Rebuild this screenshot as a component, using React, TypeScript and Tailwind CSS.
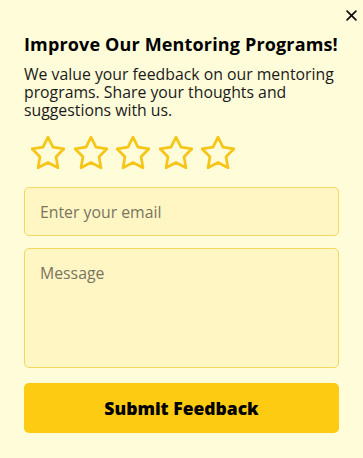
import { useState } from 'react';

function Star() {
  return (
    <svg width="34" height="33" viewBox="2.6 2.3 18.8 18.1" fill="none" stroke="#f5c518" strokeWidth="1.5" strokeLinejoin="round">
      <path d="M12 2.8l2.75 5.6 6.15.9-4.45 4.35 1.05 6.15L12 16.9l-5.5 2.9 1.05-6.15L3.1 9.3l6.15-.9z" />
    </svg>
  );
}

export default function App() {
  const [email, setEmail] = useState('');
  const [message, setMessage] = useState('');

  return (
    <div className="relative min-h-[458px] w-full bg-[#fffcd9] px-6 pt-[33px] text-black" style={{ fontFamily: '"Open Sans", sans-serif' }}>
      <button className="absolute right-[4px] top-[7px] flex h-4 w-4 items-center justify-center" aria-label="Close">
        <svg width="11" height="11" viewBox="0 0 10 10" stroke="#111" strokeWidth="1.6" strokeLinecap="round">
          <path d="M1 1l8 8M9 1l-8 8" />
        </svg>
      </button>

      <h2 className="whitespace-nowrap text-[18px] font-bold leading-[22px] tracking-[0.15px]">Improve Our Mentoring Programs!</h2>
      <p className="mt-[10px] text-[15.8px] leading-[18px] text-[#1a1a1a]">
        We value your feedback on our mentoring programs. Share your thoughts and suggestions with us.
      </p>

      <div className="mt-[17px] ml-[7px] flex gap-[8.5px]">
        {[0, 1, 2, 3, 4].map((i) => (
          <Star key={i} />
        ))}
      </div>

      <input
        value={email}
        onChange={(e) => setEmail(e.target.value)}
        placeholder="Enter your email"
        className="mt-[18px] block h-[49px] w-full rounded-[5px] border border-[#f3d860] bg-[#fff6c4] px-[15px] text-[15.8px] placeholder:text-[#7a7560] outline-none"
      />
      <textarea
        value={message}
        onChange={(e) => setMessage(e.target.value)}
        placeholder="Message"
        className="mt-[12px] block h-[120px] w-full resize-none rounded-[5px] border border-[#f3d860] bg-[#fff6c4] px-[15px] pt-[13px] text-[15.8px] placeholder:text-[#7a7560] outline-none"
      />
      <button className="mt-[15px] block h-[50px] w-full rounded-[5px] bg-[#fdcc12] text-[17.5px] font-extrabold">
        Submit Feedback
      </button>
    </div>
  );
}
